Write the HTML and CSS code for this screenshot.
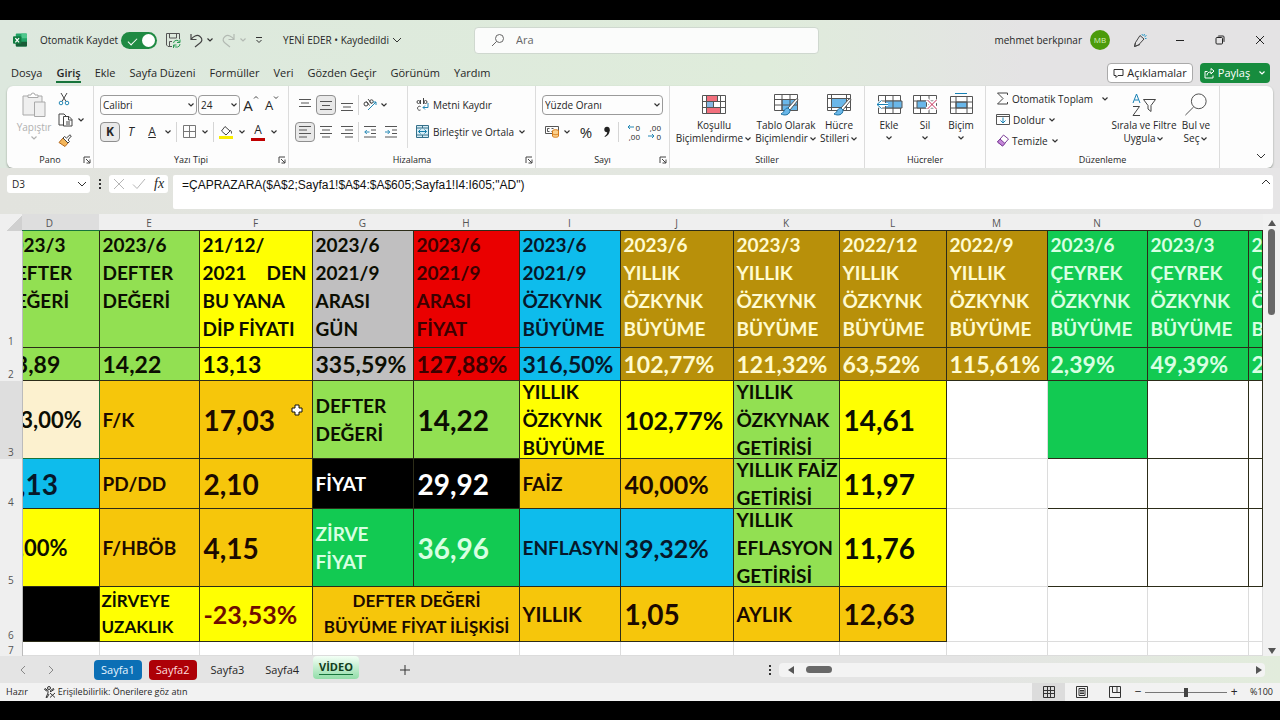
FILE: index.html
```html
<!DOCTYPE html>
<html lang="tr">
<head>
<meta charset="utf-8">
<title>YENİ EDER - Excel</title>
<link rel="stylesheet" href="styles.css">
</head>
<body>
<svg class="defs" aria-hidden="true">
  <symbol id="chev" viewBox="0 0 8 8"><path d="M1.500 2.500 4 5l2.500-2.500" fill="none" stroke="currentColor" stroke-width="1.200"/></symbol>
  <symbol id="chev-wide" viewBox="0 0 12 12"><path d="M2 4l4 4 4-4" fill="none" stroke="currentColor"/></symbol>
  <symbol id="launch" viewBox="0 0 8 8"><path d="M1 7V1h6M3 3l4 4M7 3.500V7H3.500" fill="none" stroke="currentColor"/></symbol>
</svg>
<div class="app">
  <header class="titlebar">
    <div class="title-left">
      <svg class="logo" viewBox="0 0 15 14"><rect x="3" width="12" height="14" rx="1" fill="#21a366"/><path d="M9 0h5a1 1 0 0 1 1 1v4H9z" fill="#4fc78c"/><path d="M3 9h12v4a1 1 0 0 1-1 1H4a1 1 0 0 1-1-1z" fill="#185c37"/><rect y="3" width="9" height="8" rx="1" fill="#107c41"/><path d="m2.500 5 4 4.500m0-4.500-4 4.500" stroke="#fff" stroke-width="1.300"/></svg>
      <label class="autosave">Otomatik Kaydet <input type="checkbox" checked></label>
      <button class="q save" aria-label="Kaydet"><svg width="16" height="16" viewBox="0 0 16 16" fill="none" stroke="#555"><path d="M7 14.500H3L1.500 13V1.500h13V7M4.500 1.500V6h7V1.500M4.500 14V9.500H7"/><path d="M8.500 11a3.200 3.200 0 0 1 6-1m.5-2.500V10.500h-3M15 12a3.200 3.200 0 0 1-6 1.500m-.5 2.500v-3h3" stroke="#2a9d55"/></svg></button>
      <button class="q undo" aria-label="Geri al"><svg width="15" height="15" viewBox="0 0 15 15" fill="none" stroke="#444" stroke-width="1.200"><path d="M2 1v5.500h5.500M2 6.500C4 3.500 8 1 11 3.500s2 5 0 6.500l-5 4"/></svg></button>
      <svg class="c"><use href="#chev"/></svg>
      <button class="q redo" aria-label="Yinele"><svg width="15" height="15" viewBox="0 0 15 15" fill="none" stroke="#b3bab3" stroke-width="1.200"><path d="M13 1v5.500H7.500M13 6.500C11 3.500 7 1 4 3.500s-2 5 0 6.500l5 4"/></svg></button>
      <svg class="c faint"><use href="#chev"/></svg>
      <svg class="custom" viewBox="0 0 8 8"><path d="M1 1.500h6M1.500 4 4 6.500 6.500 4" fill="none" stroke="#333"/></svg>
      <button class="docname">YENİ EDER • Kaydedildi <svg class="c wide"><use href="#chev-wide"/></svg></button>
    </div>
    <label class="search"><svg width="14" height="14" viewBox="0 0 14 14" fill="none" stroke="#666"><circle cx="8.500" cy="5.500" r="4"/><path d="M5.500 8.500 1 13"/></svg><input type="text" placeholder="Ara" aria-label="Ara"></label>
    <div class="title-right">
      <span class="user">mehmet berkpınar</span><span class="avatar">MB</span>
      <button class="w pen" aria-label="Kalem"><svg width="14" height="14" viewBox="0 0 14 14" fill="none" stroke="#444"><path d="m7 2.500 4 3.500-5.500 6-4 1.500 1-4zM2.500 9.500l-1 4 5.500-2"/><path d="m9 1 .5 1.500M11.500 1l-.8 2M13.500 2.500l-2 1.300M13.500 5.500H12" stroke="#2899c8"/></svg></button>
      <button class="w" aria-label="Simge durumuna küçült"><svg width="10" height="10" viewBox="0 0 10 10" stroke="#222"><path d="M1 5.500h8"/></svg></button>
      <button class="w" aria-label="Geri yükle"><svg width="10" height="10" viewBox="0 0 10 10" fill="none" stroke="#222"><rect x="1" y="2.500" width="6.500" height="6.500" rx="1"/><path d="M3 1.500a1 1 0 0 1 .5-.5H8a1 1 0 0 1 1 1v4.500l-.5.5"/></svg></button>
      <button class="w" aria-label="Kapat"><svg width="10" height="10" viewBox="0 0 10 10" stroke="#222"><path d="m1 1 8 8m0-8L1 9"/></svg></button>
    </div>
  </header>

  <nav class="tabs">
    <a href="#">Dosya</a><a href="#" class="on">Giriş</a><a href="#">Ekle</a><a href="#">Sayfa Düzeni</a><a href="#">Formüller</a><a href="#">Veri</a><a href="#">Gözden Geçir</a><a href="#">Görünüm</a><a href="#">Yardım</a>
    <div class="tab-actions">
      <button class="comments"><svg width="11" height="11" viewBox="0 0 11 11" fill="none" stroke="#333"><path d="M1 1.500h9v6H5L3 9.500v-2H1z"/></svg>Açıklamalar</button>
      <button class="share"><svg width="11" height="11" viewBox="0 0 11 11" fill="none" stroke="#fff"><path d="M3.500 3.500H1V10h8V7.500M3 7.500C3 5 4.500 4 7 4v2l3-3-3-2.500V2.500"/></svg>Paylaş<svg class="c"><use href="#chev"/></svg></button>
    </div>
  </nav>

  <section class="ribbon">
    <div class="group pano">
      <div class="body">
        <button class="paste"><svg width="26" height="26" viewBox="0 0 26 26" fill="#efefef" stroke="#a9a9a9"><path d="M2 4h19v19H2z"/><path d="M7 5.500V3h3a2 2 0 0 1 4 0h3v2.500z" fill="#fff"/><path d="M13.500 10H24v14.500H13.500z"/></svg><span>Yapıştır</span><svg class="c"><use href="#chev"/></svg></button>
        <div class="stack">
          <button class="i" aria-label="Kes"><svg width="12" height="14" viewBox="0 0 12 14" fill="none" stroke="#444"><path d="m3 1 5 8.500M9 1 4 9.500"/><circle cx="3" cy="11" r="1.800" stroke="#2588b5"/><circle cx="9" cy="11" r="1.800" stroke="#2588b5"/></svg></button>
          <button class="i copy" aria-label="Kopyala"><svg width="15" height="14" viewBox="0 0 15 14" fill="none" stroke="#444"><path d="M5 12H1V1h5l2 2"/><path d="M5.500 3.500H11l3 3V13H5.500zM10.500 3.500V7H14M8 9h4M8 11h4"/></svg><svg class="c"><use href="#chev"/></svg></button>
          <button class="i" aria-label="Biçim boyacısı"><svg width="14" height="13" viewBox="0 0 14 13"><path d="m5 4 5 5-3 3.500-6-4z" fill="#f3b65b" stroke="#b4681d"/><path d="m5 4 1.500-1.500 2 1.500L12 .8 13.300 2 10 6l1.500 1.500L10 9z" fill="#fff" stroke="#444"/></svg></button>
        </div>
      </div>
      <div class="cap">Pano<svg class="launch"><use href="#launch"/></svg></div>
    </div>

    <div class="group font">
      <div class="body col">
        <div class="row"><span class="sel f1"><select aria-label="Yazı tipi"><option>Calibri</option></select><svg class="c"><use href="#chev"/></svg></span><span class="sel f2"><select aria-label="Boyut"><option>24</option></select><svg class="c"><use href="#chev"/></svg></span>
          <button class="b grow">A<svg width="6" height="10" viewBox="0 0 6 10" fill="none" stroke="#444"><path d="m1 3.500 2-2 2 2"/></svg></button><button class="b grow small">A<svg width="6" height="10" viewBox="0 0 6 10" fill="none" stroke="#444"><path d="m1 1.500 2 2 2-2"/></svg></button></div>
        <div class="row"><button class="b on bold">K</button><button class="b ital">T</button><button class="b under">A</button><svg class="c"><use href="#chev"/></svg><i class="sep"></i>
          <button class="b" aria-label="Kenarlıklar"><svg width="13" height="13" viewBox="0 0 13 13" fill="none" stroke="#777"><path d="M.5.5h12v12H.5zM6.500.5v12M.5 6.500h12"/></svg></button><svg class="c"><use href="#chev"/></svg><i class="sep"></i>
          <button class="b" aria-label="Dolgu rengi"><svg width="14" height="14" viewBox="0 0 14 14" fill="none" stroke="#444"><path d="m6 1.500 5 4.500-4 4-4.500-4zM11 5.500c1-.5 1.500 1 1.500 3"/><path d="M0 12.500h14" stroke="#f9ed00" stroke-width="3"/></svg></button><svg class="c"><use href="#chev"/></svg>
          <button class="b fc">A</button><svg class="c"><use href="#chev"/></svg></div>
      </div>
      <div class="cap">Yazı Tipi<svg class="launch"><use href="#launch"/></svg></div>
    </div>

    <div class="group align">
      <div class="body">
        <div class="col aligns">
          <div class="row"><button class="b" aria-label="Üste hizala"><svg class="l" viewBox="0 0 12 12"><path d="M0 .5h12M2 4h8M0 7.500h12"/></svg></button><button class="b on" aria-label="Ortaya hizala"><svg class="l" viewBox="0 0 12 12"><path d="M0 2.500h12M2 6.500h8M0 10.500h12"/></svg></button><button class="b" aria-label="Alta hizala"><svg class="l" viewBox="0 0 12 12"><path d="M0 4.500h12M2 8h8M0 11.500h12"/></svg></button><i class="sep"></i>
            <button class="b" aria-label="Yönlendirme"><svg width="14" height="13" viewBox="0 0 14 13" fill="none" stroke="#444"><circle cx="3" cy="6" r="2"/><path d="m3.500 3.500 3 4M5 1l3.500 4.500"/><circle cx="8.500" cy="3.500" r="1.700"/><path d="m5 12 8-8M10 4h3v3" stroke="#2588b5"/></svg></button><svg class="c"><use href="#chev"/></svg></div>
          <div class="row"><button class="b on" aria-label="Sola hizala"><svg class="l" viewBox="0 0 12 12"><path d="M0 .5h12M0 4h8M0 7.500h12M0 11h8"/></svg></button><button class="b" aria-label="Ortala"><svg class="l" viewBox="0 0 12 12"><path d="M0 .5h12M2 4h8M0 7.500h12M2 11h8"/></svg></button><button class="b" aria-label="Sağa hizala"><svg class="l" viewBox="0 0 12 12"><path d="M0 .5h12M4 4h8M0 7.500h12M4 11h8"/></svg></button><i class="sep"></i>
            <button class="b" aria-label="Girintiyi azalt"><svg class="l" viewBox="0 0 12 12"><path d="M0 .5h12M7 4h5M7 7.500h5M0 11h12"/><path class="bl" d="M5.500 6H.8m2-2-2 2 2 2"/></svg></button><button class="b" aria-label="Girintiyi artır"><svg class="l" viewBox="0 0 12 12"><path d="M0 .5h12M7 4h5M7 7.500h5M0 11h12"/><path class="bl" d="M0 6h4.700m-2-2 2 2-2 2"/></svg></button></div>
        </div>
        <div class="col wraps">
          <button class="t"><svg width="13" height="13" viewBox="0 0 13 13" fill="none" stroke="#444"><circle cx="2.500" cy="4" r="1.500"/><path d="M4.500 2v4M7.500 0v6"/><circle cx="9.500" cy="4" r="1.500"/><path d="M4.500 8.500a2 2 0 1 0 0 3.500"/><path d="M12 5v4.500H7m2-2-2 2 2 2" stroke="#2588b5"/></svg>Metni Kaydır</button>
          <button class="t"><svg width="13" height="13" viewBox="0 0 13 13" fill="#d7edf6" stroke="#35708a"><path d="M.5.500h12v12H.5zM.5 3h12M.5 10h12M6.500.5V3M6.500 10v2.500"/><path d="M2.500 6.500h8m-6-2-2 2 2 2m4-4 2 2-2 2" stroke="#157da9" fill="none"/></svg>Birleştir ve Ortala<svg class="c"><use href="#chev"/></svg></button>
        </div>
      </div>
      <div class="cap">Hizalama<svg class="launch"><use href="#launch"/></svg></div>
    </div>

    <div class="group num">
      <div class="body col">
        <div class="row"><span class="sel f3"><select aria-label="Sayı biçimi"><option>Yüzde Oranı</option></select><svg class="c"><use href="#chev"/></svg></span></div>
        <div class="row"><button class="b" aria-label="Finansal"><svg width="14" height="13" viewBox="0 0 14 13" fill="none" stroke="#555"><path d="M.5 1.500h13v7H.5zM4.500 3.500h-2v3h2M6.500 3.500h2M6.500 6.500h1"/><ellipse cx="10.500" cy="6" rx="3" ry="1.300" fill="#fbd08c" stroke="#d57a18"/><path d="M7.500 6v5c0 1.700 6 1.700 6 0V6M7.500 8.500c0 1.500 6 1.500 6 0" fill="#fbd08c" stroke="#d57a18"/></svg></button><svg class="c"><use href="#chev"/></svg><button class="b pct">%</button><button class="b" aria-label="Virgül stili"><svg width="8" height="12" viewBox="0 0 8 12" fill="#222"><circle cx="4" cy="3.500" r="2.700"/><path d="M6.700 3.500c0 4-1.500 6-4.700 7.500l-.5-.7C3.500 9 4.300 7.500 4.200 5.500z"/></svg></button><i class="sep"></i>
          <button class="b dec"><span><svg width="7" height="6" viewBox="0 0 7 6" fill="none" stroke="#2588b5"><path d="M7 3H1m2-2L1 3l2 2"/></svg>0</span><span>,00</span></button><button class="b dec"><span>,00</span><span><svg width="7" height="6" viewBox="0 0 7 6" fill="none" stroke="#2588b5"><path d="M0 3h6M4 1l2 2-2 2"/></svg>0</span></button></div>
      </div>
      <div class="cap">Sayı<svg class="launch"><use href="#launch"/></svg></div>
    </div>

    <div class="group styles">
      <div class="body">
        <button class="big g1"><svg width="26" height="22" viewBox="0 0 26 22" fill="#fff" stroke="#555"><path d="M1.500 1.500h23v18h-23z"/><path d="M5.500 1.500h11v6h-11zM5.500 13.500h14v6h-14z" fill="#f2707d"/><path d="M5.500 7.500h7v6h-7z" fill="#85b7e2"/><path d="M1.500 7.500h23M1.500 13.500h23M5.500 1.500v18M19.500 1.500v18" fill="none"/></svg><span>Koşullu</span><span>Biçimlendirme<svg class="c"><use href="#chev"/></svg></span></button>
        <button class="big g2"><svg width="26" height="24" viewBox="0 0 26 24" fill="#fff" stroke="#555"><path d="M1.500 1.500h23v16h-23z"/><path d="M9 6.500h15.500v11H9z" fill="#6ab7e9"/><path d="M1.500 6.500h23M1.500 12h23M9 1.500v16M17 1.500v16" fill="none"/><path d="m25 7-8 10-2-2 8-9q2-1 2 1z"/><path d="M15 15c-4 0-3 4-7 6 4 2 9 1 9-4z" fill="#6ab7e9" stroke="#1c709f"/></svg><span>Tablo Olarak</span><span>Biçimlendir<svg class="c"><use href="#chev"/></svg></span></button>
        <button class="big g3"><svg width="26" height="24" viewBox="0 0 26 24" fill="#fff" stroke="#555"><path d="M1.500 1.500h23v16h-23z"/><path d="M5.500 5.500h15v9h-15z" fill="#6ab7e9"/><path d="M1.500 5.500h23M1.500 14.500h23M5.500 1.500v16M20.500 1.500v16" fill="none"/><path d="m25 7-8 10-2-2 8-9q2-1 2 1z"/><path d="M15 15c-4 0-3 4-7 6 4 2 9 1 9-4z" fill="#6ab7e9" stroke="#1c709f"/></svg><span>Hücre</span><span>Stilleri<svg class="c"><use href="#chev"/></svg></span></button>
      </div>
      <div class="cap">Stiller</div>
    </div>

    <div class="group cells">
      <div class="body">
        <button class="big h"><svg width="27" height="22" viewBox="0 0 27 22" fill="#fff" stroke="#555"><path d="M2.500 1.500h22v18h-22zM2.500 7h22M2.500 14h22M9.500 1.500v18M17 1.500v18"/><path d="M9.500 7H26v7H9.500z" fill="#6ab7e9"/><path d="M17 7v7"/><path d="M12 10.500H1m4.500-4-4.500 4 4.500 4" fill="none" stroke="#fff" stroke-width="3"/><path d="M12 10.500H1m4.500-4-4.500 4 4.500 4" fill="none" stroke="#1580b5"/></svg><span>Ekle</span><svg class="c"><use href="#chev"/></svg></button>
        <button class="big h"><svg width="27" height="22" viewBox="0 0 27 22" fill="#fff" stroke="#555"><path d="M1.500 1.500h23v18h-23zM1.500 7h23M1.500 14h23M8.500 1.500v18M17 1.500v18"/><path d="M5 7h9.500v7H5z" fill="#6ab7e9"/><path d="m15 6 10 9m0-9-10 9" stroke="#fff" stroke-width="4"/><path d="m15.500 6 9 9m0-9-9 9" stroke="#c42b55"/></svg><span>Sil</span><svg class="c"><use href="#chev"/></svg></button>
        <button class="big h"><svg width="27" height="24" viewBox="0 0 27 24" fill="#fff" stroke="#555"><path d="M7 .5h12" stroke="#1580b5"/><path d="M2.500 3.500h22v17h-22z"/><path d="M8 9h11v6H8z" fill="#6ab7e9"/><path d="M2.500 9h22M2.500 15h22M8 3.500v17M19 3.500v17" fill="none"/></svg><span>Biçim</span><svg class="c"><use href="#chev"/></svg></button>
      </div>
      <div class="cap">Hücreler</div>
    </div>

    <div class="group edit">
      <div class="body">
        <div class="stack tools">
          <button class="t"><svg width="13" height="13" viewBox="0 0 13 13" fill="none" stroke="#444"><path d="M11.500 3V1h-10L7 6.500 1.500 12h10v-2"/></svg>Otomatik Toplam<svg class="c mid"><use href="#chev"/></svg></button>
          <button class="t"><svg width="14" height="13" viewBox="0 0 14 13" fill="none" stroke="#555"><path d="M.5 1.500h13v10H.5zM.5 3.500h13"/><path d="M7 4.500V10M4.500 7.500 7 10l2.500-2.500" stroke="#1580b5"/></svg>Doldur<svg class="c"><use href="#chev"/></svg></button>
          <button class="t"><svg width="13" height="13" viewBox="0 0 13 13" fill="#fff" stroke="#7d3f98"><path d="m7.500 1 5 4-6 7-5-4z"/><path d="m4 5 5 4.500L6.500 12l-5-4z" fill="#c486d8"/></svg>Temizle<svg class="c"><use href="#chev"/></svg></button>
        </div>
        <button class="big s1"><svg width="26" height="24" viewBox="0 0 26 24" fill="none" stroke="#444"><path d="m2 10 3.500-9L9 10M3.500 7h4" stroke="#1580b5"/><path d="M2 13.500h6.500L2 22.500h7M12.500 6.500h12l-4.500 6v6l-3-2.500v-3.500z"/></svg><span>Sırala ve Filtre</span><span>Uygula<svg class="c"><use href="#chev"/></svg></span></button>
        <button class="big s2"><svg width="26" height="26" viewBox="0 0 26 26" fill="none" stroke="#444"><circle cx="16" cy="9" r="8"/><path d="M10.500 15 1.500 24"/></svg><span>Bul ve</span><span>Seç<svg class="c"><use href="#chev"/></svg></span></button>
      </div>
      <div class="cap">Düzenleme</div>
    </div>
    <button class="collapse" aria-label="Şeridi daralt"><svg class="c wide"><use href="#chev-wide"/></svg></button>
  </section>

  <section class="formula">
    <div class="namebox"><input type="text" value="D3" aria-label="Ad kutusu"><svg class="c wide"><use href="#chev-wide"/></svg></div>
    <span class="vdots"></span>
    <div class="fxbox">
      <button aria-label="İptal"><svg width="12" height="12" viewBox="0 0 12 12" stroke="#b5b5b5"><path d="m1 1 10 10M11 1 1 11"/></svg></button>
      <button aria-label="Gir"><svg width="14" height="12" viewBox="0 0 14 12" stroke="#b5b5b5" fill="none"><path d="m1 6.500 4 4L13 1"/></svg></button>
      <button class="fx">fx</button>
    </div>
    <div class="fbar"><input type="text" aria-label="Formül" value="=ÇAPRAZARA($A$2;Sayfa1!$A$4:$A$605;Sayfa1!I4:I605;&quot;AD&quot;)"><svg class="up" viewBox="0 0 10 8"><path d="M1 6l4-4 4 4" fill="none" stroke="#333"/></svg></div>
  </section>

  <main class="sheet">
    <div class="gridwrap">
    <table class="grid">
      <colgroup><col class="c-h"><col class="c-d"><col class="c-e"><col class="c-f"><col class="c-g"><col class="c-h2"><col class="c-i"><col class="c-j"><col class="c-k"><col class="c-l"><col class="c-m"><col class="c-n"><col class="c-o"><col></colgroup>
      <thead><tr><th class="corner"></th><th class="cur">D</th><th>E</th><th>F</th><th>G</th><th>H</th><th>I</th><th>J</th><th>K</th><th>L</th><th>M</th><th>N</th><th>O</th><th></th></tr></thead>
      <tbody>
      <tr class="r1"><th>1</th>
        <td class="lime cut"><div>2023/3<br>DEFTER<br>DEĞERİ</div></td>
        <td class="lime">2023/6<br>DEFTER<br>DEĞERİ</td>
        <td class="yellow">21/12/<br><span class="split"><span>2021</span><span>DEN</span></span>BU YANA<br>DİP FİYATI</td>
        <td class="grey">2023/6<br>2021/9<br>ARASI<br>GÜN</td>
        <td class="red">2023/6<br>2021/9<br>ARASI<br>FİYAT</td>
        <td class="blue">2023/6<br>2021/9<br>ÖZKYNK<br>BÜYÜME</td>
        <td class="gold">2023/6<br>YILLIK<br>ÖZKYNK<br>BÜYÜME</td>
        <td class="gold">2023/3<br>YILLIK<br>ÖZKYNK<br>BÜYÜME</td>
        <td class="gold">2022/12<br>YILLIK<br>ÖZKYNK<br>BÜYÜME</td>
        <td class="gold">2022/9<br>YILLIK<br>ÖZKYNK<br>BÜYÜME</td>
        <td class="green">2023/6<br>ÇEYREK<br>ÖZKYNK<br>BÜYÜME</td>
        <td class="green">2023/3<br>ÇEYREK<br>ÖZKYNK<br>BÜYÜME</td>
        <td class="green">2022/12<br>ÇEYREK<br>ÖZKYNK<br>BÜYÜME</td></tr>
      <tr class="r2"><th>2</th>
        <td class="lime cut"><div>13,89</div></td><td class="lime">14,22</td><td class="yellow">13,13</td><td class="grey">335,59%</td><td class="red">127,88%</td><td class="blue">316,50%</td><td class="gold">102,77%</td><td class="gold">121,32%</td><td class="gold">63,52%</td><td class="gold">115,61%</td><td class="green">2,39%</td><td class="green">49,39%</td><td class="green">2</td></tr>
      <tr class="r3"><th class="cur">3</th>
        <td class="cream cut d3 sel-cell"><div>13,00%</div></td><td class="orange">F/K</td><td class="orange n">17,03</td><td class="lime">DEFTER<br>DEĞERİ</td><td class="lime n">14,22</td><td class="yellow"><div class="tight">YILLIK<br>ÖZKYNK<br>BÜYÜME</div></td><td class="yellow p">102,77%</td><td class="lime"><div class="tight">YILLIK<br>ÖZKYNAK<br>GETİRİSİ</div></td><td class="yellow n">14,61</td><td class="blank"></td><td class="green"></td><td></td><td></td></tr>
      <tr class="r4"><th>4</th>
        <td class="blue cut d4 n"><div>14,13</div></td><td class="orange">PD/DD</td><td class="orange n">2,10</td><td class="black">FİYAT</td><td class="black n">29,92</td><td class="orange">FAİZ</td><td class="orange p">40,00%</td><td class="lime"><div class="tight">YILLIK FAİZ<br>GETİRİSİ</div></td><td class="yellow n">11,97</td><td class="blank"></td><td></td><td></td><td></td></tr>
      <tr class="r5"><th>5</th>
        <td class="yellow cut d5"><div>100,00%</div></td><td class="orange">F/HBÖB</td><td class="orange n">4,15</td><td class="green">ZİRVE<br>FİYAT</td><td class="green n">36,96</td><td class="blue">ENFLASYN</td><td class="blue p">39,32%</td><td class="lime"><div class="tight">YILLIK<br>EFLASYON<br>GETİRİSİ</div></td><td class="yellow n">11,76</td><td class="blank"></td><td></td><td></td><td></td></tr>
      <tr class="r6"><th>6</th>
        <td class="black"></td><td class="yellow s">ZİRVEYE<br>UZAKLIK</td><td class="yellow neg">-23,53%</td><td class="orange s center" colspan="2">DEFTER DEĞERİ<br>BÜYÜME FİYAT İLİŞKİSİ</td><td class="orange m">YILLIK</td><td class="orange n">1,05</td><td class="orange m">AYLIK</td><td class="orange n">12,63</td><td class="blank"></td><td class="blank"></td><td class="blank"></td><td class="blank"></td></tr>
      <tr class="r7"><th>7</th><td class="blank"></td><td class="blank"></td><td class="blank"></td><td class="blank"></td><td class="blank"></td><td class="blank"></td><td class="blank"></td><td class="blank"></td><td class="blank"></td><td class="blank"></td><td class="blank"></td><td class="blank"></td><td class="blank"></td></tr>
      </tbody>
    </table>
    <svg class="cursor" viewBox="0 0 12 12"><path d="M4 1h4v3h3v4H8v3H4V8H1V4h3z" fill="#fff" stroke="#111"/></svg>
    </div>
    <div class="vscroll"><i class="tri up-t"></i><i class="thumb"></i><i class="tri down-t"></i></div>
  </main>

  <div class="sheetbar">
    <div class="navs"><button aria-label="Önceki"><svg width="6" height="10" viewBox="0 0 6 10" fill="none" stroke="#888"><path d="M5 1 1 5l4 4"/></svg></button><button aria-label="Sonraki"><svg width="6" height="10" viewBox="0 0 6 10" fill="none" stroke="#888"><path d="m1 1 4 4-4 4"/></svg></button></div>
    <button class="st s-blue">Sayfa1</button><button class="st s-red">Sayfa2</button><button class="st">Sayfa3</button><button class="st">Sayfa4</button><button class="st s-on"><span>VİDEO</span></button>
    <button class="plus" aria-label="Yeni sayfa"><svg width="10" height="10" viewBox="0 0 10 10" stroke="#333"><path d="M5 0v10M0 5h10"/></svg></button>
    <span class="vdots"></span>
    <div class="hscroll"><i class="tri left-t"></i><i class="thumb"></i><i class="tri right-t"></i></div>
  </div>

  <footer class="status">
    <span>Hazır</span>
    <span class="acc"><svg width="12" height="12" viewBox="0 0 12 12" fill="none" stroke="#333"><circle cx="5" cy="2" r="1.500"/><path d="M1 2.500 4 4.500V7l-2 4.500 1 .3 2-3.800M9.500 2.500 6.500 4.500V6M1 2.500l-.5 1 2.500 1.700M9.500 2.500l.5 1-3 2M6 7l5 4.500M11 7l-5 4.500"/></svg>Erişilebilirlik: Önerilere göz atın</span>
    <div class="views">
      <button class="v on" aria-label="Normal"><svg width="12" height="12" viewBox="0 0 12 12" fill="none" stroke="#333"><path d="M.5.5h11v11H.5zM4.500.5v11M7.500.5v11M.5 4.500h11M.5 7.500h11"/></svg></button>
      <button class="v" aria-label="Sayfa düzeni"><svg width="12" height="12" viewBox="0 0 12 12" fill="none" stroke="#333"><path d="M.5.5h11v11H.5zM3 2.500h6v7H3zM4 4.500h4M4 6h4M4 7.500h4"/></svg></button>
      <button class="v" aria-label="Sayfa sonu"><svg width="12" height="12" viewBox="0 0 12 12" fill="none" stroke="#333"><path d="M.5.5h11v11H.5zM3.500.5v6H8v-6M8 6.500h3.500"/></svg></button>
      <button class="z">−</button><input type="range" aria-label="Yakınlaştır" min="0" max="200" value="100"><button class="z">+</button><span class="pc">%100</span>
    </div>
  </footer>
</div>
</body>
</html>
```
FILE: styles.css
```css
* { box-sizing: border-box; }
body {
  margin: 0;
  padding: 20px 0;
  min-height: 100vh;
  background: #000;
  font: 11px/14px "Open Sans", "Noto Sans", sans-serif;
  color: #262626;
  display: flex;
  flex-direction: column;
}
.defs { position: absolute; width: 0; height: 0; }
button, input, select { font: inherit; color: inherit; border: 0; background: none; padding: 0; margin: 0; }
button { display: flex; align-items: center; justify-content: center; white-space: nowrap; }
a { color: inherit; text-decoration: none; }
svg { flex: none; display: block; }
.c { width: 8px; height: 8px; color: #333; }
.c.wide { width: 12px; height: 12px; }
.faint { color: #b3bab3; }
.app {
  flex: 1;
  display: flex;
  flex-direction: column;
  background: linear-gradient(90deg, #dde8de 0%, #dfecdb 60%, #e4e3e4 80%);
}

/* title bar */
.titlebar { display: grid; grid-template-columns: 474fr 345fr 461fr; height: 40px; align-items: center; }
.title-left { display: flex; align-items: center; padding-left: 13px; white-space: nowrap; }
.logo { width: 14px; height: 14px; margin-right: 13px; }
.autosave { display: flex; align-items: center; gap: 3px; font-size: 10px; }
.autosave input {
  appearance: none; width: 36px; height: 17px; border-radius: 9px; background: #1f8a43;
  display: flex; align-items: center; justify-content: space-between; padding: 0 2px 0 7px;
}
.autosave input::before { content: ""; width: 8px; height: 4px; border: solid #fff; border-width: 0 0 1px 1px; transform: rotate(-45deg); }
.autosave input::after { content: ""; width: 13px; height: 13px; border-radius: 50%; background: #fff; }
.save { margin-left: 8px; }
.undo { margin: 0 2px 0 8px; }
.redo { margin: 0 3px 0 7px; }
.custom { width: 8px; height: 8px; margin: 0 20px 0 8px; }
.docname { gap: 2px; font-size: 10px; }
.search {
  display: flex; align-items: center; gap: 11px; height: 27px; padding-left: 16px;
  background: #fbfcfb; border: 1px solid #cfd8cf; border-radius: 4px;
}
.search input { flex: 1; min-width: 0; outline: 0; }
.search input::placeholder { color: #666; }
.title-right { display: flex; justify-content: flex-end; align-items: center; padding-right: 10px; }
.user { font-size: 10px; margin-right: 8px; }
.avatar { width: 20px; height: 20px; border-radius: 50%; background: #4b9b0b; color: #d9f0b8; font-size: 8px; line-height: 20px; text-align: center; }
.w { width: 20px; height: 20px; margin-left: 20px; }

/* ribbon tabs */
.tabs { display: flex; align-items: center; height: 26px; gap: 14px; padding: 0 10px 0 11px; }
.tabs a { white-space: nowrap; padding-top: 2px; border-bottom: 2px solid transparent; line-height: 16px; }
.tabs .on { font-weight: 600; border-color: #17743b; }
.tab-actions { margin-left: auto; display: flex; gap: 7px; }
.comments, .share { height: 20px; border-radius: 4px; gap: 3px; }
.comments { width: 86px; background: #fff; border: 1px solid #aaa; }
.share { width: 70px; background: #178c3e; color: #fff; }
.share .c { color: #fff; margin-left: 5px; }

/* ribbon */
.ribbon {
  display: flex; height: 82px; margin: 0 7px; background: #fdfdfd;
  border-radius: 6px; box-shadow: 0 1px 2px #8d958d; white-space: nowrap;
}
.group { position: relative; display: flex; flex-direction: column; border-right: 1px solid #dcdcdc; flex: none; }
.body { flex: 1; display: flex; }
.col { display: flex; flex-direction: column; }
.row { display: flex; align-items: center; height: 27px; }
.body.col, .body > .col { padding-top: 5px; }
.cap { height: 16px; display: flex; justify-content: center; font-size: 9px; line-height: 16px; }
.launch { position: absolute; right: 2px; bottom: 4px; width: 8px; height: 8px; color: #444; }
.b { width: 20px; height: 20px; font-size: 12px; border-radius: 4px; }
.b.on { background: #e9e9e9; border: 1px solid #8f8f8f; }
.bold { font-weight: 700; }
.ital { font-style: italic; }
.under { text-decoration: underline; }
.fc { line-height: 12px; background: linear-gradient(#c00000, #c00000) center 16px / 14px 3px no-repeat; border-radius: 0; padding-bottom: 4px; }
.grow { font-size: 15px; }
.grow.small { font-size: 13px; }
.grow svg { align-self: flex-start; }
.sep { width: 1px; height: 20px; background: #d5d5d5; }
.sel { position: relative; height: 20px; display: flex; align-items: center; border: 1px solid #9a9a9a; border-radius: 4px; }
.sel select { appearance: none; width: 100%; height: 18px; padding-left: 2px; font-size: 10px; outline: 0; }
.sel .c { position: absolute; right: 1px; top: 5px; pointer-events: none; }
.l { width: 12px; height: 12px; fill: none; stroke: #555; }
.l .bl { stroke: #2588b5; }
.t { gap: 4px; height: 27px; font-size: 10px; }

.pano { width: 87px; }
.pano .body { padding-left: 9px; }
.paste { flex-direction: column; width: 36px; justify-content: flex-start; padding-top: 6px; color: #b0b0b0; font-size: 10px; }
.paste span { margin-top: 2px; }
.paste .c { color: #b0b0b0; }
.stack { display: flex; flex-direction: column; padding-top: 2px; }
.pano .stack { margin-left: 6px; }
.i { height: 21px; justify-content: flex-start; gap: 4px; }

.font { width: 195px; }
.font .body { padding-left: 6px; }
.f1 { width: 97px; margin-right: 1px; }
.f2 { width: 42px; margin-right: 1px; }
.font .row .b + .b { margin-left: 1px; }
.font .row .sep { margin: 0 2px; }
.font .c { margin: 0 2px; }
.font .sel .c { margin: 0; }

.align { width: 247px; }
.aligns { padding-left: 6px; width: 119px; border-right: 1px solid #dcdcdc; margin-bottom: 4px; }
.aligns .b + .b { margin-left: 1px; }
.aligns .sep { margin: 0 1px; }
.wraps { padding-left: 8px; align-items: flex-start; }

.num { width: 134px; }
.num .body { padding-left: 6px; }
.f3 { width: 121px; }
.num .row { gap: 1px; }
.pct { font-size: 15px; margin-left: 4px; }
.dec { flex-direction: column; font-size: 8px; line-height: 9px; align-items: flex-end; }
.dec span { display: flex; align-items: center; gap: 1px; }

.big { flex-direction: column; justify-content: flex-start; font-size: 10px; line-height: 13px; padding-top: 7px; }
.big > svg:first-child { height: 24px; margin-bottom: 2px; }
.big span { display: flex; align-items: center; gap: 1px; }
.styles { width: 195px; }
.styles .body { padding-left: 7px; }
.g1 { width: 74px; }
.g2 { width: 70px; }
.g3 { width: 36px; }
.cells { width: 121px; }
.cells .body { padding-left: 6px; }
.h { width: 36px; }
.h .c { margin-top: 2px; }
.edit { width: 234px; }
.edit .body { padding-left: 10px; }
.tools { width: 112px; align-items: flex-start; }
.tools .t { height: 21px; gap: 3px; }
.mid { margin-left: 5px; }
.s1 { width: 72px; }
.s2 { width: 32px; }
.collapse { margin: auto 6px 6px auto; }

/* formula bar */
.formula {
  display: flex; gap: 5px; padding: 7px 7px 5px; height: 46px;
  background: linear-gradient(90deg, #e2e3de, #e3e7e0 50%, #e6e5e6);
}
.namebox, .fxbox { height: 18px; background: #fff; border-radius: 3px; display: flex; align-items: center; }
.namebox { width: 83px; padding: 0 2px 0 5px; }
.namebox input { flex: 1; min-width: 0; font-size: 10px; outline: 0; }
.vdots { width: 9px; height: 18px; background: radial-gradient(circle, #333 1px, transparent 1px) center / 4px 4px repeat-y content-box; padding: 3px 2px; }
.fxbox { width: 59px; justify-content: space-around; }
.fx { font: italic 14px/16px "Liberation Serif", serif; }
.fbar { flex: 1; background: #fff; display: flex; align-items: flex-start; justify-content: space-between; padding: 3px 2px 0 9px; border-radius: 2px; }
.fbar input { flex: 1; font: 12px/14px "Liberation Sans", sans-serif; outline: 0; color: #111; }
.up { width: 10px; height: 8px; }

/* worksheet */
.sheet { flex: 1; display: flex; background: #fff; min-height: 0; }
.gridwrap { flex: 1; min-width: 0; position: relative; overflow: hidden; }
.grid { width: 100%; table-layout: fixed; border-collapse: collapse; font: 700 19px/28px Lato, sans-serif; color: #0c0e02; }
.c-h { width: 22px; } .c-d { width: 77px; } .c-e { width: 100px; } .c-f { width: 113px; } .c-g { width: 101px; }
.c-h2 { width: 106px; } .c-i { width: 101px; } .c-j { width: 113px; } .c-k { width: 106px; } .c-l { width: 107px; }
.c-m { width: 101px; } .c-n { width: 100px; } .c-o { width: 101px; }
.grid th { font: 400 10px/14px "Open Sans", sans-serif; color: #555; background: #efefef; padding: 0; }
.grid thead th { height: 16px; padding-top: 2px; }
.grid thead .cur { background: #dedede; border-bottom: 1px solid #17743b; padding-right: 22px; }
.grid tbody th { vertical-align: bottom; border-right: 1px solid #bbb; }
.grid tbody th.cur { background: #dedede; }
.grid .corner { background: linear-gradient(135deg, #efefef 60%, #d0d0d0 60%); }
.grid td { border: 1px solid #2c2c18; padding: 0 0 0 3px; overflow: hidden; white-space: nowrap; vertical-align: middle; }
.grid td.cut { padding: 0; }
.cut div { margin-left: -21px; }
.d3, .d5 { font-size: 22px; }
.d3 div { margin-left: -15px; }
.d4 div { margin-left: -36px; }
.d5 div { margin-left: -42px; }
.tight { margin: -4px 0; }
.r1 { height: 117px; } .r2 { height: 33px; } .r3 { height: 78px; } .r4 { height: 50px; } .r5 { height: 78px; } .r6 { height: 55px; } .r7 { height: 14px; }
.grid .r1 td { vertical-align: top; }
.r2 td { font-size: 23px; }
.grid .r7 th { line-height: 12px; }
.grid .n { font-size: 28px; padding-left: 4px; }
.grid .p { font-size: 25px; padding-left: 4px; }
.grid .m { font-size: 20px; }
.grid .s { font-size: 17px; line-height: 26px; padding-left: 2px; }
.grid .neg { font-size: 25px; padding-left: 4px; color: #6e0d00; }
.center { text-align: center; }
.split { display: flex; justify-content: space-between; padding-right: 5px; }
.lime { background: #92e052; }
.yellow { background: #ffff02; }
.grey { background: #c0bfc0; }
.red { background: #ea0000; color: #3c0000; }
.blue { background: #0ebcec; color: #06182a; }
.gold { background: #b8900a; color: #fffbd0; }
.green { background: #12ca52; color: #d8ffe2; }
.orange { background: #f6c60b; color: #1c0a00; }
.cream { background: #fcf1cf; }
.black { background: #000; color: #fff; }
.grid .blank { border-color: #dcdcdc; }
.grid .sel-cell { border: 1px solid #17743b; }
.cursor { position: absolute; left: 291px; top: 190px; width: 12px; height: 12px; }
.vscroll { width: 17px; background: #f1f1f1; display: flex; flex-direction: column; align-items: center; padding: 6px 0 2px; }
.tri { border: 4px solid transparent; }
.up-t { border-top: 0; border-bottom: 6px solid #555; }
.down-t { border-bottom: 0; border-top: 6px solid #555; margin-top: auto; }
.vscroll .thumb { width: 7px; height: 86px; border-radius: 4px; background: #686868; margin-top: 3px; }

/* sheet tabs */
.sheetbar { display: flex; align-items: center; height: 27px; background: linear-gradient(90deg, #e4e4e4 75%, #e2ecdc); }
.navs { display: flex; gap: 22px; padding-left: 20px; width: 94px; }
.st { height: 20px; padding: 0 7px; border-radius: 4px; font-size: 11px; margin-right: 7px; }
.s-blue { background: #0b6fb5; color: #e4f4ff; }
.s-red { background: #ad0007; color: #ffdede; }
.s-on { background: linear-gradient(#f4fff6, #92dda8); font-weight: 700; padding: 0 6px; align-self: flex-start; height: 23px; color: #123d20; }
.s-on span { border-bottom: 1px solid #17743b; }
.plus { margin-left: 34px; }
.sheetbar .vdots { margin-left: auto; }
.hscroll { width: 38%; height: 14px; margin: 0 15px 0 4px; background: #f3f3f3; border-radius: 4px; display: flex; align-items: center; padding: 0 3px 0 9px; }
.left-t { border-left: 0; border-right: 6px solid #555; }
.right-t { border-right: 0; border-left: 6px solid #555; margin-left: auto; }
.hscroll .thumb { width: 26px; height: 7px; border-radius: 4px; background: #686868; margin-left: 12px; }

/* status bar */
.status { display: flex; align-items: center; height: 18px; padding: 0 7px 0 6px; background: #f2f2f2; font-size: 9px; }
.acc { display: flex; align-items: center; gap: 2px; margin-left: 16px; }
.views { display: flex; align-items: center; margin-left: auto; }
.v { width: 33px; height: 18px; }
.v.on { background: #dcdcdc; }
.z { width: 14px; font-size: 12px; }
.views input { appearance: none; width: 82px; height: 10px; background: linear-gradient(#777, #777) center / 100% 1px no-repeat; }
.views input::-webkit-slider-thumb { appearance: none; width: 4px; height: 9px; background: #444; }
.pc { margin-left: 9px; }
```
